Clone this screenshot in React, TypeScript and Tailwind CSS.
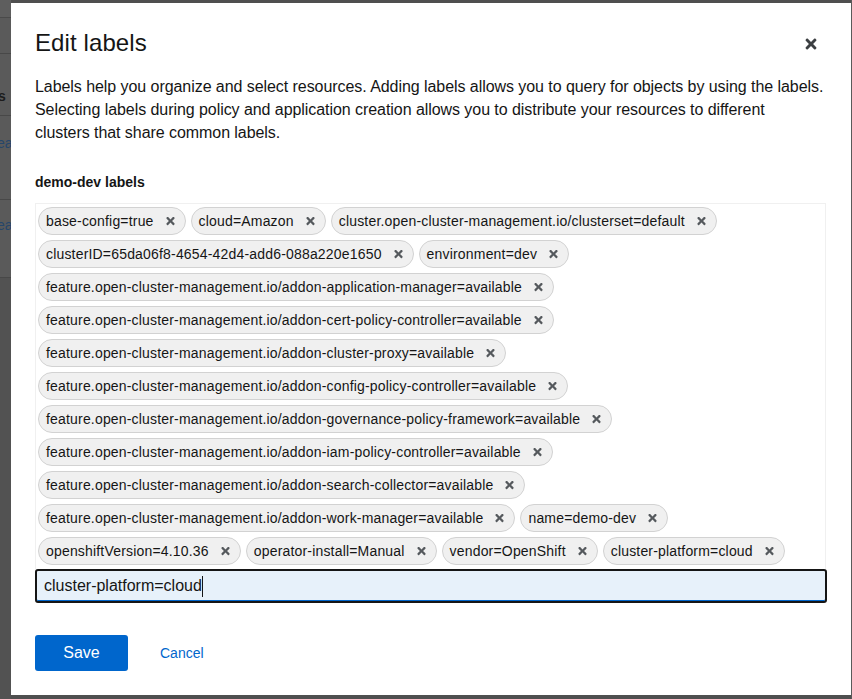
import { ReactNode } from "react";

const labels = [
  "base-config=true",
  "cloud=Amazon",
  "cluster.open-cluster-management.io/clusterset=default",
  "clusterID=65da06f8-4654-42d4-add6-088a220e1650",
  "environment=dev",
  "feature.open-cluster-management.io/addon-application-manager=available",
  "feature.open-cluster-management.io/addon-cert-policy-controller=available",
  "feature.open-cluster-management.io/addon-cluster-proxy=available",
  "feature.open-cluster-management.io/addon-config-policy-controller=available",
  "feature.open-cluster-management.io/addon-governance-policy-framework=available",
  "feature.open-cluster-management.io/addon-iam-policy-controller=available",
  "feature.open-cluster-management.io/addon-search-collector=available",
  "feature.open-cluster-management.io/addon-work-manager=available",
  "name=demo-dev",
  "openshiftVersion=4.10.36",
  "operator-install=Manual",
  "vendor=OpenShift",
  "cluster-platform=cloud",
];

const TimesIcon = ({ className }: { className?: string }) => (
  <svg viewBox="0 0 352 512" className={className} fill="currentColor" aria-hidden>
    <path d="M242.72 256l100.07-100.07c12.28-12.28 12.28-32.19 0-44.480l-22.24-22.24c-12.28-12.28-32.19-12.28-44.48 0L176 189.28 75.93 89.21c-12.28-12.28-32.19-12.28-44.48 0L9.21 111.45c-12.28 12.28-12.28 32.19 0 44.48L109.28 256 9.21 356.07c-12.28 12.28-12.28 32.19 0 44.48l22.24 22.24c12.28 12.28 32.2 12.28 44.48 0L176 322.72l100.07 100.07c12.28 12.28 32.2 12.28 44.48 0l22.24-22.24c12.28-12.28 12.28-32.19 0-44.48L242.72 256z" />
  </svg>
);

const Chip = ({ children }: { children: ReactNode }) => (
  <div className="flex items-center h-[28px] rounded-full border border-[#d2d2d2] bg-[#f0f0f0] pl-[7px] pr-[10px] text-[14px] tracking-[0.18px] text-[#151515]">
    <span className="whitespace-nowrap">{children}</span>
    <TimesIcon className="ml-[12px] w-[9px] h-[12px] text-[#55595d]" />
  </div>
);

// the page behind the overlay, only a sliver of it shows
const PageBehind = () => (
  <div className="w-[11px] shrink-0 flex flex-col bg-[#565656] text-[14px] overflow-hidden">
    <div className="h-[18px] bg-[#5e5e5e] border-b border-[#4a4a4a]" />
    <div className="h-[36px] border-b border-[#484848] bg-[#5a5a5a]" />
    <div className="h-[62px] border-b border-[#484848] bg-[#5a5a5a] flex items-center">
      <span className="font-bold text-[#1c1c1c] -ml-[2px] mt-[23px]">s</span>
    </div>
    <div className="h-[84px] border-b border-[#484848] bg-[#5a5a5a]">
      <span className="block text-[#26466a] -ml-[3px] mt-[17px]">ea</span>
    </div>
    <div className="h-[78px] border-b border-[#484848] bg-[#5a5a5a]">
      <span className="block text-[#26466a] -ml-[3px] mt-[15px]">ea</span>
    </div>
    <div className="flex-1 bg-[#525252]" />
  </div>
);

export default function App() {
  return (
    <div
      className="w-[852px] h-[699px] flex bg-[#4f4f4f] overflow-hidden"
      style={{ fontFamily: '"Liberation Sans", Arial, sans-serif' }}
    >
      <PageBehind />
      <div className="pt-[3px]">
        <div className="w-[840px] h-[692px] bg-white px-[24px] pt-[24px] pb-[24px] flex flex-col text-[#151515]">
          <div className="flex items-start justify-between">
            <h1 className="text-[24px] leading-[31px] tracking-[0.1px]">Edit labels</h1>
            <button className="mt-[9px] mr-[10px] text-[#3c3f42]">
              <TimesIcon className="w-[12px] h-[16px]" />
            </button>
          </div>

          <p className="mt-[17px] text-[16px] leading-[23px] tracking-[-0.06px]">
            Labels help you organize and select resources. Adding labels allows you to query for objects by using
            the labels.
            <br />
            Selecting labels during policy and application creation allows you to distribute your resources to
            different
            <br />
            clusters that share common labels.
          </p>

          <div className="mt-[28px] text-[14px] leading-[21px] font-bold">demo-dev labels</div>

          <div className="mt-[10px] border border-[#f0f0f0] border-b-0 pt-[3px] pl-[2px] pr-[2px] pb-[4px] flex flex-wrap gap-x-[5px] gap-y-[5px] mr-[1px]">
            {labels.map((l) => (
              <Chip key={l}>{l}</Chip>
            ))}
          </div>

          <div className="h-[37px] rounded-[3px] border-2 border-[#151515] bg-[#e7f1fa] flex items-center px-[7px] text-[16px] shadow-[inset_0_-1px_0_#0066cc]">
            <span>cluster-platform=cloud</span>
            <span className="w-px h-[21px] bg-[#151515]" />
          </div>

          <div className="mt-[32px] flex items-center gap-[16px]">
            <button className="w-[93px] h-[36px] rounded-[3px] bg-[#0066cc] text-white text-[16px]">Save</button>
            <button className="px-[16px] h-[36px] text-[#0066cc] text-[14px]">Cancel</button>
          </div>
        </div>
      </div>
      <div className="w-px bg-[#5a5a5a]" />
    </div>
  );
}
